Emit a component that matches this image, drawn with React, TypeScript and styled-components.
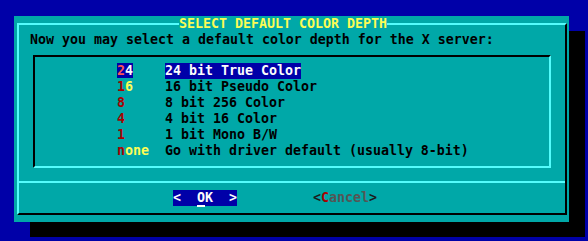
import styled, { createGlobalStyle } from "styled-components";

const GlobalStyle = createGlobalStyle`
  html, body {
    margin: 0;
    background: #0000a8;
    height: 100%;
  }
  #root {
    padding: 16px 0 0 14px;
  }
`

const Dialog = styled.div`
  width: 555px;
  background: #00a8a8;
  box-shadow: 16px 15px 0 #000;
  padding: 0 2px 7px 3px;
  box-sizing: border-box;
  display: flow-root;
  font-family: "DejaVu Sans Mono", "Liberation Mono", monospace;
  font-weight: bold;
  font-size: 13.29px;
  line-height: 16px;
  color: #000;
  white-space: pre;
`

const Frame = styled.fieldset`
  margin: 0;
  padding: 0;
  min-inline-size: 0;
  border: 2px solid #000;
  border-top-color: #54fcfc;
  border-left-color: #54fcfc;
`

const Title = styled.legend`
  margin-left: 160px;
  padding: 0;
  color: #fcfc54;
  line-height: 16px;
  background: #00a8a8;
`

const Prompt = styled.div`
  padding-left: 11px;
  height: 16px;
`

const ListBox = styled.div`
  margin: 7px 14px 0 14px;
  border: 2px solid #54fcfc;
  border-top-color: #000;
  border-left-color: #000;
  padding: 6px 0 7px 82px;
`

const Row = styled.div`
  display: flex;
  height: 16px;
`

const TagCell = styled.div`
  width: 48px;
  flex: none;
`

const Hl = styled.span<{ $on: boolean }>`
  background: ${(p) => (p.$on ? "#0000a8" : "transparent")};
  color: ${(p) => (p.$on ? "#fcfcfc" : "inherit")};
`

const Hot = styled.span<{ $on: boolean }>`
  color: ${(p) => (p.$on ? "#fc5454" : "#a80000")};
`

const Rest = styled.span<{ $on: boolean }>`
  color: ${(p) => (p.$on ? "#fcfcfc" : "#fcfc54")};
`

const Separator = styled.div`
  margin-top: 13px;
  height: 2px;
  background: #54fcfc;
`

const Buttons = styled.div`
  display: flex;
  gap: 76px;
  padding: 7px 0 7px 154px;
`

const Button = styled.div<{ $active?: boolean }>`
  height: 16px;
  background: ${(p) => (p.$active ? "#0000a8" : "transparent")};
  color: ${(p) => (p.$active ? "#fcfcfc" : "#555")};
`

const Bracket = styled.span<{ $active?: boolean }>`
  color: ${(p) => (p.$active ? "#fcfcfc" : "#1c1c1c")};
`

const Key = styled.span<{ $active?: boolean }>`
  color: ${(p) => (p.$active ? "#fcfcfc" : "#a80000")};
  text-decoration: ${(p) => (p.$active ? "underline" : "none")};
  text-decoration-thickness: 2px;
  text-underline-offset: 3px;
`

const items = [
  { tag: "24", text: "24 bit True Color" },
  { tag: "16", text: "16 bit Pseudo Color" },
  { tag: "8", text: "8 bit 256 Color" },
  { tag: "4", text: "4 bit 16 Color" },
  { tag: "1", text: "1 bit Mono B/W" },
  { tag: "none", text: "Go with driver default (usually 8-bit)" },
];

const selected = 0;

export default function App() {
  return (
    <>
      <GlobalStyle />
      <Dialog>
        <Frame>
          <Title>SELECT DEFAULT COLOR DEPTH</Title>
          <Prompt>Now you may select a default color depth for the X server:</Prompt>
          <ListBox>
            {items.map((item, i) => {
              const on = i === selected;
              return (
                <Row key={item.tag}>
                  <TagCell>
                    <Hl $on={on}>
                      <Hot $on={on}>{item.tag[0]}</Hot>
                      <Rest $on={on}>{item.tag.slice(1)}</Rest>
                    </Hl>
                  </TagCell>
                  <Hl $on={on}>{item.text}</Hl>
                </Row>
              );
            })}
          </ListBox>
          <Separator />
          <Buttons>
            <Button $active>
              <Bracket $active>{"<  "}</Bracket>
              <Key $active>O</Key>K
              <Bracket $active>{"  >"}</Bracket>
            </Button>
            <Button>
              <Bracket>{"<"}</Bracket>
              <Key>C</Key>ancel
              <Bracket>{">"}</Bracket>
            </Button>
          </Buttons>
        </Frame>
      </Dialog>
    </>
  );
}
